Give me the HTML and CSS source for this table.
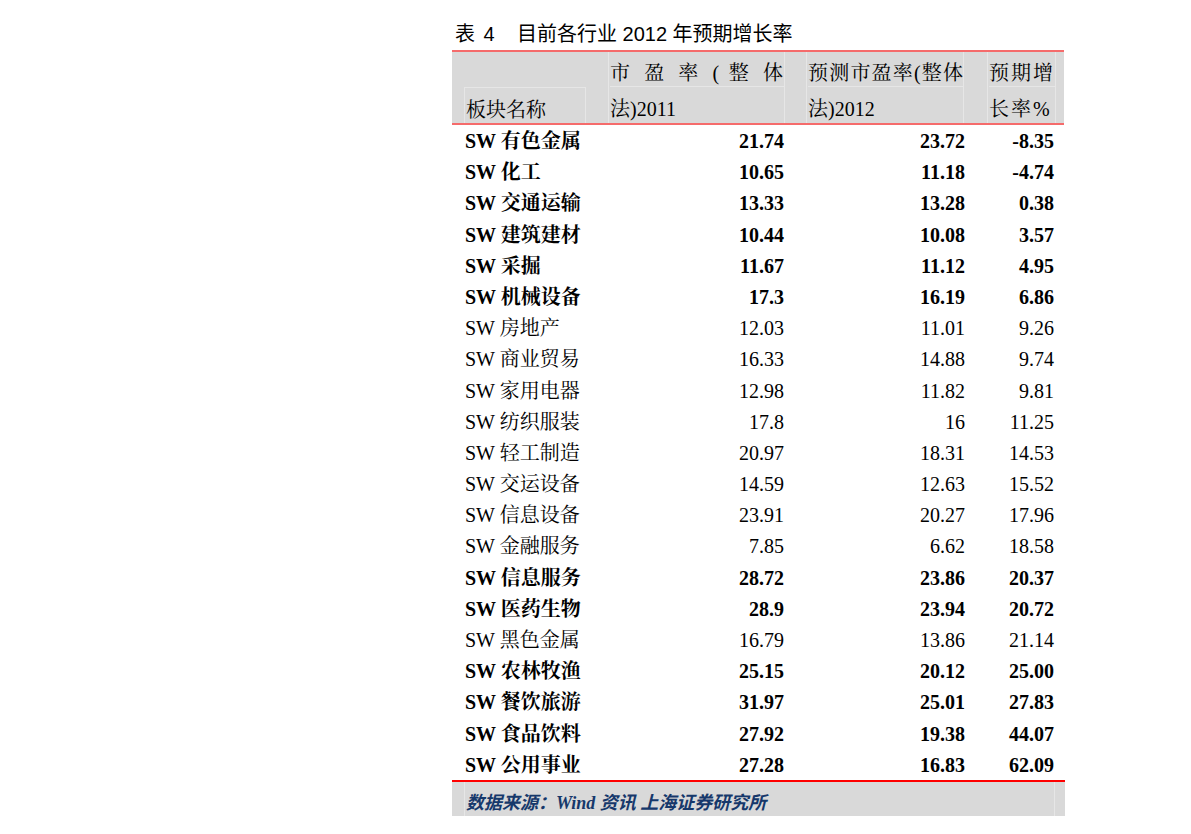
FILE: index.html
```html
<!DOCTYPE html>
<html lang="zh-CN">
<head>
<meta charset="utf-8">
<title>表 4 目前各行业 2012 年预期增长率</title>
<link rel="stylesheet" href="styles.css">
</head>
<body>
<div class="sheet">
  <div class="title"><span class="tno">表 4</span><span>目前各行业 2012 年预期增长率</span></div>
  <div class="table">
    <div class="head">
      <div class="hc c1">
        <div class="hl1"></div>
        <div class="hl2 box1">板块名称</div>
      </div>
      <div class="hc c2">
        <div class="hbox b2">
          <div class="hl1 just">市 盈 率 ( 整 体</div>
          <div class="hl2">法)2011</div>
        </div>
      </div>
      <div class="hc c3">
        <div class="hbox b3">
          <div class="hl1 sp1">预测市盈率(整体</div>
          <div class="hl2">法)2012</div>
        </div>
      </div>
      <div class="hc c4">
        <div class="hbox b4">
          <div class="hl1 sp2">预期增</div>
          <div class="hl2 sp2">长率%</div>
        </div>
      </div>
    </div>
    <div class="body">
      <div class="row b"><div class="nm">SW 有色金属</div><div class="v2">21.74</div><div class="v3">23.72</div><div class="v4">-8.35</div></div>
      <div class="row b"><div class="nm">SW 化工</div><div class="v2">10.65</div><div class="v3">11.18</div><div class="v4">-4.74</div></div>
      <div class="row b"><div class="nm">SW 交通运输</div><div class="v2">13.33</div><div class="v3">13.28</div><div class="v4">0.38</div></div>
      <div class="row b"><div class="nm">SW 建筑建材</div><div class="v2">10.44</div><div class="v3">10.08</div><div class="v4">3.57</div></div>
      <div class="row b"><div class="nm">SW 采掘</div><div class="v2">11.67</div><div class="v3">11.12</div><div class="v4">4.95</div></div>
      <div class="row b"><div class="nm">SW 机械设备</div><div class="v2">17.3</div><div class="v3">16.19</div><div class="v4">6.86</div></div>
      <div class="row"><div class="nm">SW 房地产</div><div class="v2">12.03</div><div class="v3">11.01</div><div class="v4">9.26</div></div>
      <div class="row"><div class="nm">SW 商业贸易</div><div class="v2">16.33</div><div class="v3">14.88</div><div class="v4">9.74</div></div>
      <div class="row"><div class="nm">SW 家用电器</div><div class="v2">12.98</div><div class="v3">11.82</div><div class="v4">9.81</div></div>
      <div class="row"><div class="nm">SW 纺织服装</div><div class="v2">17.8</div><div class="v3">16</div><div class="v4">11.25</div></div>
      <div class="row"><div class="nm">SW 轻工制造</div><div class="v2">20.97</div><div class="v3">18.31</div><div class="v4">14.53</div></div>
      <div class="row"><div class="nm">SW 交运设备</div><div class="v2">14.59</div><div class="v3">12.63</div><div class="v4">15.52</div></div>
      <div class="row"><div class="nm">SW 信息设备</div><div class="v2">23.91</div><div class="v3">20.27</div><div class="v4">17.96</div></div>
      <div class="row"><div class="nm">SW 金融服务</div><div class="v2">7.85</div><div class="v3">6.62</div><div class="v4">18.58</div></div>
      <div class="row b"><div class="nm">SW 信息服务</div><div class="v2">28.72</div><div class="v3">23.86</div><div class="v4">20.37</div></div>
      <div class="row b"><div class="nm">SW 医药生物</div><div class="v2">28.9</div><div class="v3">23.94</div><div class="v4">20.72</div></div>
      <div class="row"><div class="nm">SW 黑色金属</div><div class="v2">16.79</div><div class="v3">13.86</div><div class="v4">21.14</div></div>
      <div class="row b"><div class="nm">SW 农林牧渔</div><div class="v2">25.15</div><div class="v3">20.12</div><div class="v4">25.00</div></div>
      <div class="row b"><div class="nm">SW 餐饮旅游</div><div class="v2">31.97</div><div class="v3">25.01</div><div class="v4">27.83</div></div>
      <div class="row b"><div class="nm">SW 食品饮料</div><div class="v2">27.92</div><div class="v3">19.38</div><div class="v4">44.07</div></div>
      <div class="row b"><div class="nm">SW 公用事业</div><div class="v2">27.28</div><div class="v3">16.83</div><div class="v4">62.09</div></div>
    </div>
    <div class="foot">
      <div class="fbox">数据来源：Wind 资讯 上海证券研究所</div>
    </div>
  </div>
</div>
</body>
</html>
```

FILE: styles.css
```css
html, body {
  margin: 0;
  padding: 0;
  background: #ffffff;
}

.sheet {
  width: 612px;
  margin-left: 452px;
  color: #000000;
}

.title {
  margin-top: 22px;
  height: 24px;
  line-height: 24px;
  padding-left: 3px;
  font-family: "Liberation Sans", "Noto Sans CJK SC", sans-serif;
  font-size: 20px;
  display: flex;
  margin-bottom: 4px;
}

.tno {
  width: 62px;
  word-spacing: 3px;
}

.table {
  font-family: "Liberation Serif", "Noto Serif CJK SC", "Noto Sans CJK SC", serif;
  font-size: 20px;
}

.head {
  display: grid;
  grid-template-columns: 156px 198px 180px 78px;
  background: #d9d9d9;
  border-top: 2px solid #f56b6b;
  border-bottom: 2px solid #f56b6b;
  height: 71px;
}

.hc {
  display: flex;
  flex-direction: column;
  height: 71px;
}

.hl1 {
  height: 35px;
  line-height: 35px;
  padding-top: 4px;
  box-sizing: border-box;
  white-space: nowrap;
}

.hl2 {
  height: 36px;
  line-height: 36px;
  padding-top: 4px;
  box-sizing: border-box;
  white-space: nowrap;
}

.box1 {
  margin-left: 12px;
  margin-right: 22px;
  padding-left: 1px;
  border: 1px solid #e6e6e6;
  border-bottom: none;
}

.hbox {
  height: 71px;
  border-left: 1px solid #e6e6e6;
  border-right: 1px solid #e6e6e6;
  box-sizing: border-box;
  padding-left: 1px;
}

.hbox .hl1 {
  border-bottom: 1px solid #e6e6e6;
}

.b2 {
  width: 177px;
}

.b3 {
  width: 158px;
}

.b4 {
  width: 69px;
  margin-left: 1px;
}

.just {
  text-align: justify;
  text-align-last: justify;
  padding-right: 1px;
}

.sp1 {
  letter-spacing: 1.2px;
}

.sp2 {
  letter-spacing: 2px;
}

.body {
  padding-top: 1px;
}

.row {
  display: grid;
  grid-template-columns: 156px 198px 180px 78px;
  height: 31.2px;
  line-height: 31.2px;
  white-space: nowrap;
}

.row.b {
  font-weight: bold;
}

.nm {
  padding-left: 13px;
}

.v2 {
  text-align: right;
  padding-right: 22px;
}

.v3 {
  text-align: right;
  padding-right: 21px;
}

.v4 {
  text-align: right;
  padding-right: 10px;
}

.foot {
  border-top: 2px solid #ff0000;
  background: #d9d9d9;
  height: 34px;
  margin-top: -1px;
  margin-right: -1px;
}

.fbox {
  height: 34px;
  margin-left: 12px;
  margin-right: 10px;
  border-left: 1px solid #e6e6e6;
  border-right: 1px solid #e6e6e6;
  padding-left: 1px;
  padding-top: 8px;
  box-sizing: border-box;
  line-height: 26px;
  font-family: "Liberation Serif", "Noto Sans CJK SC", serif;
  font-style: italic;
  font-weight: bold;
  font-size: 18px;
  color: #16386b;
  white-space: nowrap;
}
```
